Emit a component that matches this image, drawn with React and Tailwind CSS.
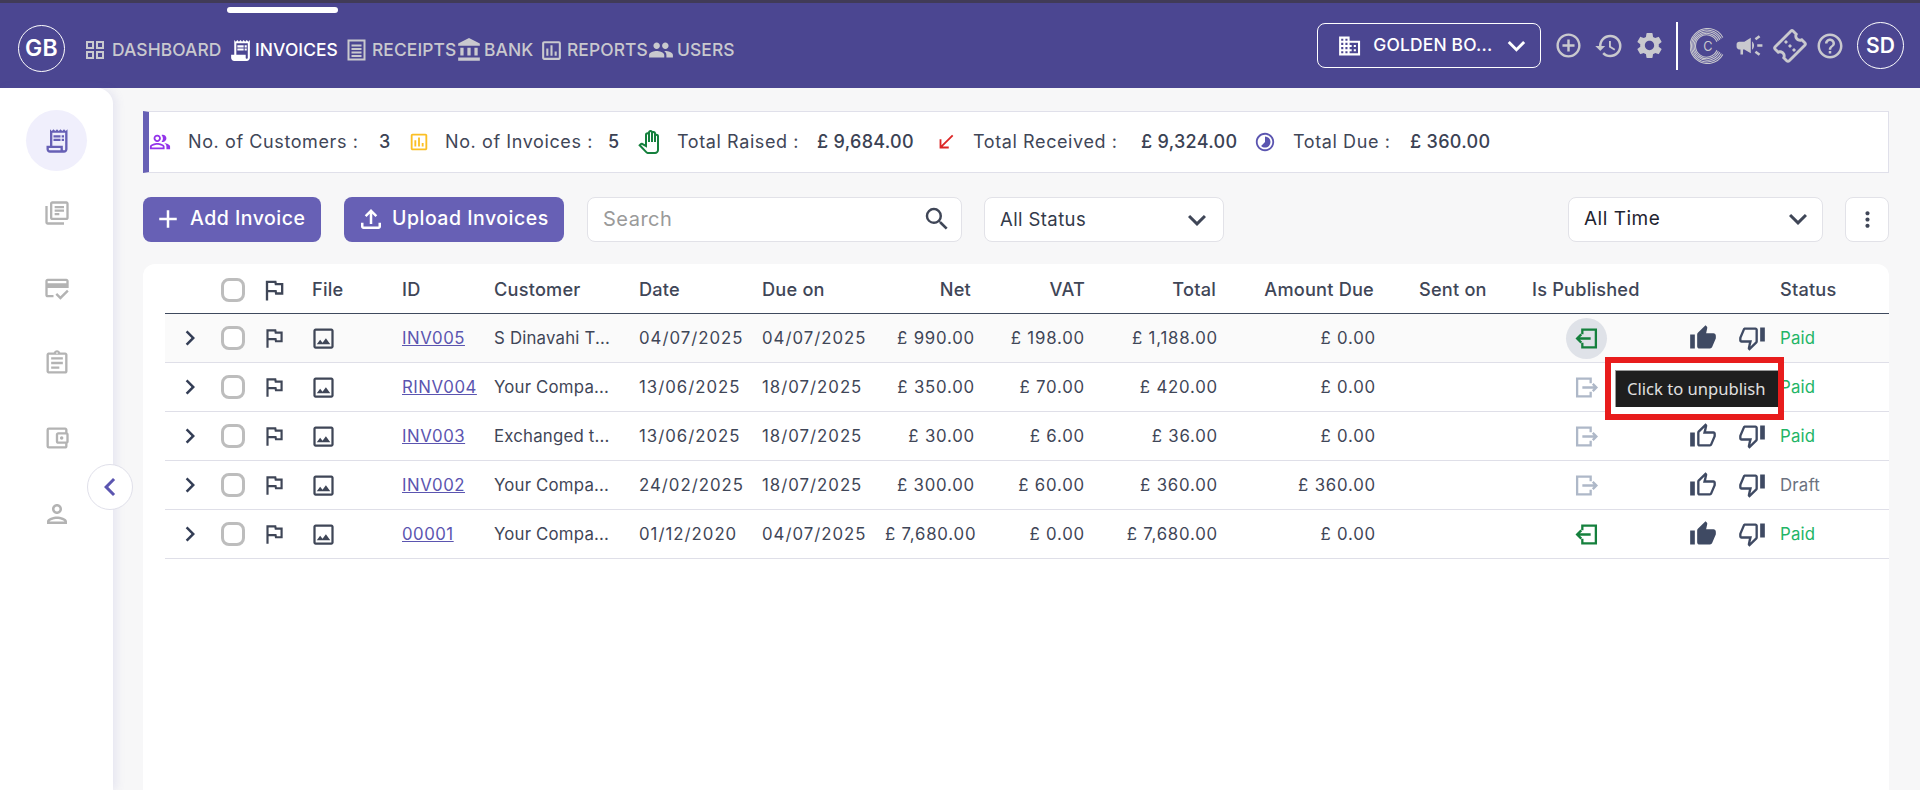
import React from "react";
import {
  MdOutlineGridView, MdReceiptLong, MdOutlineReceiptLong, MdAccountBalance, MdOutlineAssessment, MdPeople,
  MdOutlineAddCircleOutline, MdHistory, MdSettings, MdCampaign, MdOutlineConfirmationNumber, MdHelpOutline,
  MdBusiness, MdKeyboardArrowDown, MdOutlineLibraryBooks, MdOutlineCreditScore, MdOutlineAssignment,
  MdOutlineAccountBalanceWallet, MdOutlinePerson, MdOutlineAssistantPhoto, MdOutlineImage, MdThumbUp,
  MdOutlineThumbUp, MdOutlineThumbDown, MdOutlinePeopleAlt, MdOutlinePanTool, MdCallReceived, MdTimelapse,
  MdAdd, MdOutlineFileUpload, MdSearch, MdMoreVert, MdChevronRight, MdChevronLeft,
} from "react-icons/md";

const font = { fontFamily: "Inter, 'Open Sans', sans-serif" };

function ReceiptIcon({ className }) {
  return (
    <svg viewBox="0 0 20 24" className={className} fill="none" stroke="currentColor">
      <rect x="2" y="2.5" width="16" height="19" strokeWidth="2" />
      <path d="M5 7.5h10M5 11h10M5 14.5h10M5 18h10" strokeWidth="1.8" />
    </svg>
  );
}

function ClogoIcon({ className }) {
  return (
    <svg viewBox="0 0 34 34" className={className} fill="none" stroke="currentColor" strokeWidth="1">
      <path d="M31 9A16.5 16.5 0 1 0 31 25" />
      <path d="M29.6 10A15 15 0 1 0 29.6 24" />
      <path d="M28.2 11A13.5 13.5 0 1 0 28.2 23" />
      <path d="M26.8 12A12 12 0 1 0 26.8 22" />
      <path d="M25.4 13A10.5 10.5 0 1 0 25.4 21" />
      <text x="17" y="21.5" fontSize="12" textAnchor="middle" fill="currentColor" stroke="none" fontFamily="Inter, sans-serif">C</text>
    </svg>
  );
}

function PublishIcon({ published, className }) {
  return published ? (
    <svg viewBox="0 0 24 24" className={className} fill="none" stroke="currentColor" strokeWidth="2.2">
      <path d="M8 8V3.5h13v17H8V16" />
      <path d="M16 12H3M7 8l-4 4 4 4" />
    </svg>
  ) : (
    <svg viewBox="0 0 24 24" className={className} fill="none" stroke="currentColor" strokeWidth="2.2">
      <path d="M16 8V3.5H3v17h13V16" />
      <path d="M8 12h13M18 8.5l3.5 3.5-3.5 3.5" />
    </svg>
  );
}

function NavItem({ icon: Icon, label, active, iconClass, textClass }) {
  return (
    <div className={`flex items-center ${active ? "text-white" : "text-[#c9c9ce]"}`}>
      <Icon className={iconClass} />
      <span className={`text-[17.4px] font-medium uppercase tracking-[0.1px] ${textClass}`}>{label}</span>
    </div>
  );
}

function Stat({ icon, label, value, labelW, valueW }) {
  return (
    <div className="flex items-center">
      {icon}
      <span className={`pb-[2px] text-[#3f4657] text-[18px] tracking-[0.6px] whitespace-nowrap ${labelW}`}>{label}</span>
      <span className={`pb-[2px] text-[#3b4254] text-[18px] font-medium tracking-[0.3px] whitespace-nowrap ${valueW}`}>{value}</span>
    </div>
  );
}

const rows = [
  { id: "INV005", customer: "S Dinavahi T...", date: "04/07/2025", due: "04/07/2025", net: "£ 990.00", vat: "£ 198.00", total: "£ 1,188.00", amount: "£ 0.00", published: true, highlight: true, up: true, status: "Paid" },
  { id: "RINV004", customer: "Your Compa...", date: "13/06/2025", due: "18/07/2025", net: "£ 350.00", vat: "£ 70.00", total: "£ 420.00", amount: "£ 0.00", published: false, up: false, status: "Paid" },
  { id: "INV003", customer: "Exchanged t...", date: "13/06/2025", due: "18/07/2025", net: "£ 30.00", vat: "£ 6.00", total: "£ 36.00", amount: "£ 0.00", published: false, up: false, status: "Paid" },
  { id: "INV002", customer: "Your Compa...", date: "24/02/2025", due: "18/07/2025", net: "£ 300.00", vat: "£ 60.00", total: "£ 360.00", amount: "£ 360.00", published: false, up: false, status: "Draft" },
  { id: "00001", customer: "Your Compa...", date: "01/12/2020", due: "04/07/2025", net: "£ 7,680.00", vat: "£ 0.00", total: "£ 7,680.00", amount: "£ 0.00", published: true, up: true, status: "Paid" },
];

const gridCols = "grid grid-cols-[56px_44px_47px_90px_92px_145px_123px_123px_90px_110px_133px_158px_156px_120px_128px_1fr] items-center";

function Checkbox() {
  return <div className="h-[24px] w-[24px] rounded-[8px] border-[3px] border-[#bdbdbd] bg-white" />;
}

export default function App() {
  return (
    <div className="relative flex h-screen w-full flex-col overflow-hidden bg-[#f7f7f8] tracking-[0.2px]" style={font}>
      <div className="h-[3px] bg-[#413b57]" />
      <header className="relative flex h-[85px] items-center bg-[#4b4691]">
        <div className="absolute left-[227px] top-[4px] h-[6px] w-[111px] rounded-[3px] bg-white" />
        <div className="ml-[18px] mt-[6px] flex h-[47px] w-[47px] items-center justify-center rounded-full border border-white text-[23px] font-semibold text-white">GB</div>
        <nav className="ml-[18px] mt-[10px] flex items-center">
          <NavItem icon={MdOutlineGridView} label="Dashboard" iconClass="h-[24px] w-[24px] mr-[5px]" textClass="w-[116px]" />
          <NavItem icon={MdReceiptLong} label="Invoices" active iconClass="h-[25px] w-[25px] mr-[2px]" textClass="w-[91px]" />
          <NavItem icon={ReceiptIcon} label="Receipts" iconClass="h-[24px] w-[21px] mr-[5px]" textClass="w-[84px]" />
          <NavItem icon={MdAccountBalance} label="Bank" iconClass="h-[26px] w-[26px] mr-[2px]" textClass="w-[55px]" />
          <NavItem icon={MdOutlineAssessment} label="Reports" iconClass="h-[25px] w-[25px] mr-[3px]" textClass="w-[81px]" />
          <NavItem icon={MdPeople} label="Users" iconClass="h-[26px] w-[26px] mr-[3px]" textClass="w-[60px]" />
        </nav>
        <div className="ml-auto flex items-center text-[#c9c9ce]">
          <div className="flex h-[45px] w-[224px] items-center rounded-[8px] border border-white pl-[19px] pr-[6px] text-white">
            <MdBusiness className="h-[26px] w-[26px]" />
            <span className="ml-[11px] w-[130px] whitespace-nowrap text-[17.4px] font-medium">GOLDEN BO...</span>
            <MdKeyboardArrowDown className="h-[36px] w-[36px]" />
          </div>
          <MdOutlineAddCircleOutline className="ml-[13px] h-[29px] w-[29px]" />
          <MdHistory className="ml-[11px] h-[30px] w-[30px]" />
          <MdSettings className="ml-[10px] h-[31px] w-[31px]" />
          <div className="ml-[11px] h-[48px] w-[2px] bg-white" />
          <ClogoIcon className="ml-[12px] h-[36px] w-[36px]" />
          <MdCampaign className="ml-[8px] h-[31px] w-[31px]" />
          <MdOutlineConfirmationNumber className="ml-[8px] h-[34px] w-[34px] -rotate-45" />
          <MdHelpOutline className="ml-[8px] h-[30px] w-[30px]" />
          <div className="ml-[12px] mr-[16px] flex h-[47px] w-[47px] items-center justify-center rounded-full border border-white text-[21px] font-semibold text-white">SD</div>
        </div>
      </header>

      <div className="flex min-h-0 flex-1">
        <aside className="z-10 flex w-[113px] shrink-0 flex-col items-center rounded-tr-[16px] bg-white pt-[22px] shadow-[4px_0_8px_rgba(100,95,190,0.10)]">
          <div className="flex h-[61px] w-[61px] items-center justify-center rounded-full bg-[#f0effc] text-[#6760b5]">
            <MdOutlineReceiptLong className="h-[28px] w-[28px]" />
          </div>
          <div className="flex flex-col items-center gap-[47px] pt-[28px] text-[#b3b3b3]">
            <MdOutlineLibraryBooks className="h-[28px] w-[28px]" />
            <MdOutlineCreditScore className="h-[28px] w-[28px]" />
            <MdOutlineAssignment className="h-[28px] w-[28px]" />
            <MdOutlineAccountBalanceWallet className="h-[28px] w-[28px]" />
            <MdOutlinePerson className="h-[30px] w-[30px]" />
          </div>
        </aside>

        <main className="flex min-w-0 flex-1 flex-col pl-[30px] pr-[31px] pt-[23px]">
          <div className="flex h-[62px] items-center border-y border-r border-[#e0e0ea] border-l-[6px] border-l-[#6760b5] bg-white">
            <Stat icon={<MdOutlinePeopleAlt className="mr-[17px] h-[22px] w-[22px] text-[#9333ea]" />} label="No. of Customers :" value="3" labelW="w-[191px]" valueW="w-[29px]" />
            <Stat icon={<MdOutlineAssessment className="mr-[15px] h-[22px] w-[22px] text-[#fbbf24]" />} label="No. of Invoices :" value="5" labelW="w-[163px]" valueW="w-[29px]" />
            <Stat icon={<MdOutlinePanTool className="mr-[16px] h-[24px] w-[24px] text-[#15803d]" />} label="Total Raised :" value="£ 9,684.00" labelW="w-[140px]" valueW="w-[118px]" />
            <Stat icon={<MdCallReceived className="mr-[16px] h-[22px] w-[22px] text-[#dc2626]" />} label="Total Received :" value="£ 9,324.00" labelW="w-[168px]" valueW="w-[113px]" />
            <Stat icon={<MdTimelapse className="mr-[17px] h-[22px] w-[22px] text-[#5b55b0]" />} label="Total Due :" value="£ 360.00" labelW="w-[117px]" valueW="w-[100px]" />
          </div>

          <div className="mt-[24px] flex h-[45px] items-stretch">
            <button className="flex w-[178px] items-center rounded-[8px] bg-[#6760b5] pb-[1px] pl-[10px] text-[19.5px] font-medium tracking-[0.5px] text-white">
              <MdAdd className="mr-[7px] h-[30px] w-[30px]" />Add Invoice
            </button>
            <button className="ml-[23px] flex w-[220px] items-center rounded-[8px] bg-[#6760b5] pb-[1px] pl-[12px] text-[19.5px] font-medium tracking-[0.5px] text-white">
              <MdOutlineFileUpload className="mr-[6px] h-[30px] w-[30px]" />Upload Invoices
            </button>
            <div className="ml-[23px] flex w-[375px] items-center rounded-[8px] border border-[#e2e2e8] bg-white pb-[1px] pl-[15px] pr-[9px]">
              <span className="flex-1 text-[20px] tracking-[0.5px] text-[#9a9a9a]">Search</span>
              <MdSearch className="h-[30px] w-[30px] text-[#3f4657]" />
            </div>
            <div className="ml-[22px] flex w-[240px] items-center rounded-[8px] border border-[#e2e2e8] bg-white pl-[15px] pr-[8px]">
              <span className="flex-1 text-[18.5px] tracking-[0.4px] text-[#333a4a]">All Status</span>
              <MdKeyboardArrowDown className="h-[36px] w-[36px] text-[#3f4657]" />
            </div>
            <div className="ml-auto flex w-[255px] items-center rounded-[8px] border border-[#e2e2e8] bg-white pb-[1px] pl-[15px] pr-[6px]">
              <span className="flex-1 text-[19px] tracking-[0.5px] text-[#1f2430]">All Time</span>
              <MdKeyboardArrowDown className="h-[36px] w-[36px] text-[#3f4657]" />
            </div>
            <div className="ml-[22px] flex w-[44px] items-center justify-center rounded-[8px] border border-[#e2e2e8] bg-white">
              <MdMoreVert className="h-[25px] w-[25px] text-[#3f4657]" />
            </div>
          </div>

          <div className="mt-[22px] flex-1 rounded-t-[12px] bg-white pl-[22px]">
            <div className={`${gridCols} h-[50px] border-b-[1.5px] border-[#3f4a5e] pt-[2px] text-[18.2px] font-medium text-[#3f4657]`}>
              <span />
              <Checkbox />
              <MdOutlineAssistantPhoto className="-ml-[5px] h-[28px] w-[28px]" />
              <span>File</span>
              <span>ID</span>
              <span>Customer</span>
              <span>Date</span>
              <span>Due on</span>
              <span className="-translate-x-[4px] text-right">Net</span>
              <span className="text-right">VAT</span>
              <span className="-translate-x-[2px] text-right">Total</span>
              <span className="-translate-x-[2px] text-right">Amount Due</span>
              <span className="pl-[43px]">Sent on</span>
              <span className="col-span-2">Is Published</span>
              <span>Status</span>
            </div>
            {rows.map((r) => (
              <div key={r.id} className={`${gridCols} h-[49px] border-b border-[#dfdfe8] text-[16.8px] text-[#3f4657] ${r.highlight ? "bg-[#fafafa]" : ""}`}>
                <MdChevronRight className="ml-[10px] h-[30px] w-[30px] text-[#333d55]" />
                <Checkbox />
                <MdOutlineAssistantPhoto className="-ml-[4px] h-[26px] w-[26px]" />
                <MdOutlineImage className="-ml-[2px] h-[27px] w-[27px]" />
                <a className="pt-[1px] tracking-[0.5px] text-[#5b55b0] underline">{r.id}</a>
                <span className="pt-[1px] whitespace-nowrap">{r.customer}</span>
                <span className="pt-[1px] tracking-[1px]">{r.date}</span>
                <span className="pt-[1px] tracking-[1px]">{r.due}</span>
                <span className="pt-[1px] text-right whitespace-nowrap tracking-[0.8px]">{r.net}</span>
                <span className="pt-[1px] text-right tracking-[0.8px]">{r.vat}</span>
                <span className="pt-[1px] text-right whitespace-nowrap tracking-[0.8px]">{r.total}</span>
                <span className="pt-[1px] text-right tracking-[0.8px]">{r.amount}</span>
                <span />
                <div className="flex w-[110px] justify-center">
                  <div className={`-ml-[1px] flex h-[41px] w-[41px] items-center justify-center rounded-full ${r.highlight ? "bg-[#dfe2e8]" : ""}`}>
                    <PublishIcon published={r.published} className={`h-[25px] w-[25px] ${r.published ? "text-[#15803d]" : "text-[#aeb8c8]"}`} />
                  </div>
                </div>
                <div className="flex items-center justify-end gap-[21px] pr-[14px]">
                  {r.up ? <MdThumbUp className="h-[28px] w-[28px] text-[#3f4a63]" /> : <MdOutlineThumbUp className="h-[28px] w-[28px] text-[#3f4a63]" />}
                  <MdOutlineThumbDown className="h-[28px] w-[28px] text-[#3f4a63]" />
                </div>
                <span className={`pt-[1px] ${r.status === "Paid" ? "text-[#22b566]" : "text-[#6b7280]"}`}>{r.status}</span>
              </div>
            ))}
          </div>
        </main>
      </div>

      <div className="absolute left-[87px] top-[464px] z-20 flex h-[46px] w-[46px] items-center justify-center rounded-full border border-[#e0e0ea] bg-white">
        <MdChevronLeft className="h-[36px] w-[36px] text-[#5b55b0]" />
      </div>

      <div className="absolute left-[1605px] top-[357px] z-30 h-[63px] w-[179px] border-[6px] border-[#e81c1c] bg-white pl-[4px] pt-[7px]">
        <div className="flex h-[37px] items-center whitespace-nowrap border-l border-t border-[#9a9a9a] bg-[#1e1e1e] pl-[11px] text-[16.6px] tracking-normal text-[#e0e0e0]" style={{ fontFamily: "'Noto Sans', sans-serif" }}>Click to unpublish</div>
      </div>
    </div>
  );
}
